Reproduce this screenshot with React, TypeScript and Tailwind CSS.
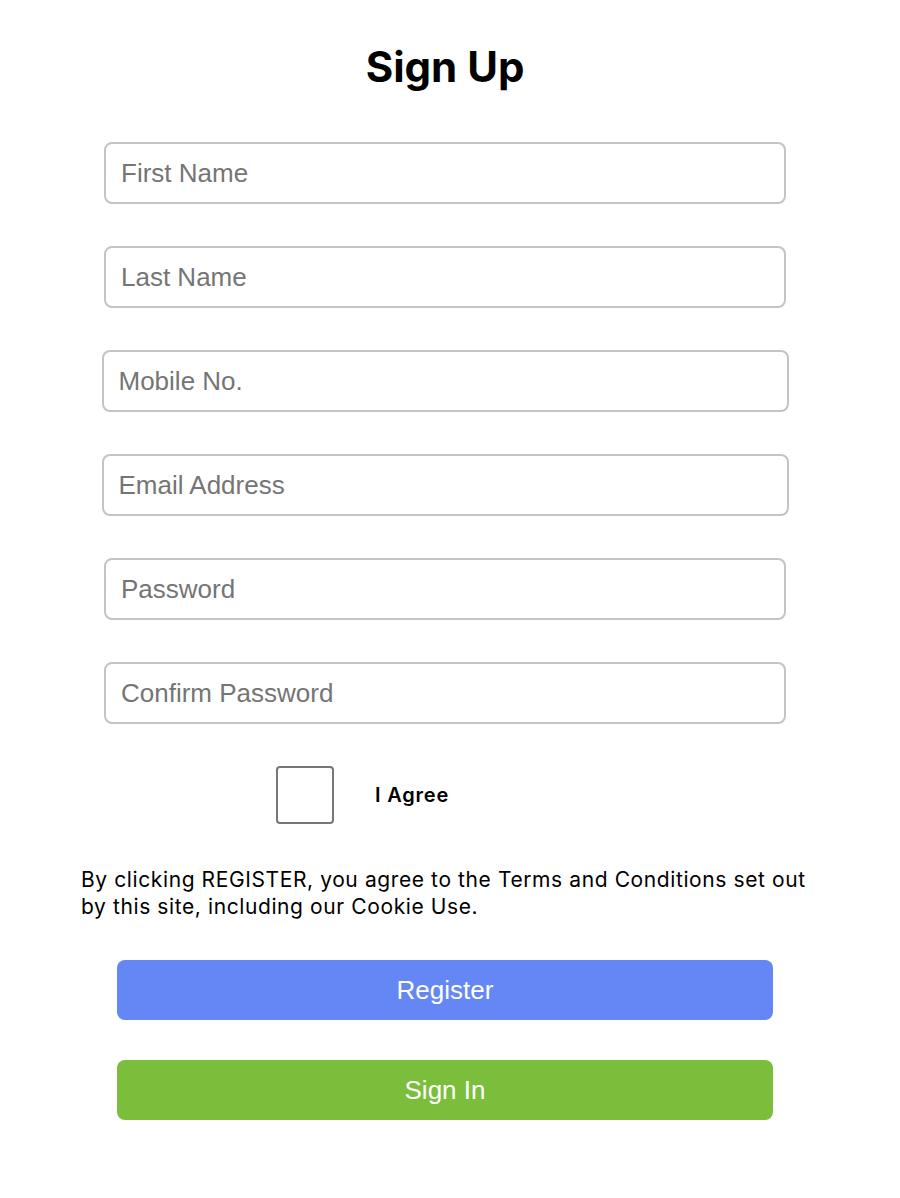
import React from "react";

const fields = [
  { placeholder: "First Name", type: "text", wide: false },
  { placeholder: "Last Name", type: "text", wide: false },
  { placeholder: "Mobile No.", type: "tel", wide: true },
  { placeholder: "Email Address", type: "email", wide: true },
  { placeholder: "Password", type: "password", wide: false },
  { placeholder: "Confirm Password", type: "password", wide: false },
];

const App = () => {
  return (
    <div className="w-[900px] min-h-[1198px] bg-white font-['Inter',sans-serif]">
      <div className="w-[890px] flex flex-col items-center">
        <h1 className="mt-[40px] text-[42px] font-bold leading-[54px] text-black">
          Sign Up
        </h1>

        <form className="mt-[48px] flex flex-col items-center gap-[42px]">
          {fields.map((f) => (
            <input
              key={f.placeholder}
              type={f.type}
              placeholder={f.placeholder}
              className={`h-[62px] rounded-[8px] border-2 border-[#c4c4c4] pl-[15px] text-[26px] font-['Liberation_Sans',Arial,sans-serif] text-black placeholder:text-[#757575] outline-none ${
                f.wide ? "w-[687px]" : "w-[682px]"
              }`}
            />
          ))}
        </form>

        <div className="mt-[42px] w-full flex items-center pl-[276px]">
          <div className="w-[58px] h-[58px] rounded-[4px] border-2 border-[#767676] bg-white" />
          <span className="ml-[41px] text-[20px] font-semibold tracking-[0.8px] text-black">
            I Agree
          </span>
        </div>

        <p className="mt-[42px] w-full pl-[81px] text-[21px] leading-[27px] tracking-[0.6px] text-black">
          <span className="block w-[736px]">
            By clicking REGISTER, you agree to the Terms and Conditions set out
            by this site, including our Cookie Use.
          </span>
        </p>

        <button className="mt-[40px] w-[656px] h-[60px] rounded-[8px] bg-[#6487f5] text-white text-[26px] font-['Liberation_Sans',Arial,sans-serif]">
          Register
        </button>
        <button className="mt-[40px] w-[656px] h-[60px] rounded-[8px] bg-[#7abe3c] text-white text-[26px] font-['Liberation_Sans',Arial,sans-serif]">
          Sign In
        </button>
      </div>
    </div>
  );
};

export default App;
